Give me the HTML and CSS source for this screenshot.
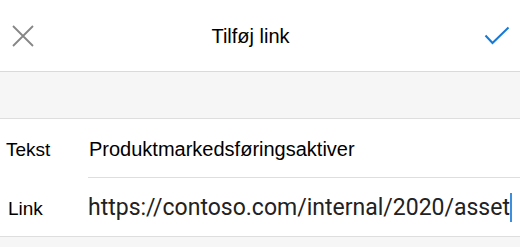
FILE: index.html
```html
<!DOCTYPE html>
<html lang="da">
<head>
<meta charset="utf-8">
<title>Tilføj link</title>
<link rel="stylesheet" href="styles.css">
</head>
<body>
<div class="screen">
  <header class="topbar">
    <button class="icon-btn close" aria-label="Luk">
      <svg width="22" height="22" viewBox="0 0 22 22"><path d="M1 1 L21 21 M21 1 L1 21" stroke="#868686" stroke-width="1.8" fill="none"/></svg>
    </button>
    <h1 class="title">Tilføj link</h1>
    <button class="icon-btn done" aria-label="Udført">
      <svg width="26" height="20" viewBox="0 0 26 20"><path d="M1.5 9.5 L8.5 17 L24.5 1.5" stroke="#1579d6" stroke-width="2" fill="none"/></svg>
    </button>
  </header>
  <div class="band"></div>
  <section class="form">
    <div class="row">
      <div class="label">Tekst</div>
      <div class="value">Produktmarkedsføringsaktiver</div>
    </div>
    <div class="row second">
      <div class="label link-label">Link</div>
      <div class="value url">https://contoso.com/internal/2020/asset<span class="caret"></span></div>
    </div>
  </section>
  <div class="rest"></div>
</div>
</body>
</html>
```
FILE: styles.css
```css
html, body {
  margin: 0;
  padding: 0;
  background: #f6f6f6;
}
.screen {
  width: 520px;
  height: 247px;
  overflow: hidden;
  font-family: "Liberation Sans", Arial, sans-serif;
  color: #000;
}
.topbar {
  height: 71px;
  background: #fff;
  border-bottom: 1px solid #dadada;
  display: flex;
  align-items: center;
  position: relative;
}
.icon-btn {
  border: 0;
  background: none;
  padding: 0;
  display: flex;
}
.close {
  margin-left: 12px;
  margin-top: 1px;
}
.title {
  flex: 1;
  margin: 0;
  text-align: center;
  font-weight: normal;
  font-size: 20px;
  line-height: 24px;
  padding-right: 17px;
  padding-top: 0px;
}
.done {
  margin-right: 10px;
  margin-top: 0px;
}
.band {
  height: 46px;
  background: #f6f6f6;
  border-bottom: 1px solid #dedede;
}
.form {
  background: #fff;
  border-bottom: 1px solid #dedede;
}
.row {
  display: flex;
  height: 58px;
}
.row.second {
  height: 59px;
}
.label {
  width: 82px;
  padding-left: 6px;
  font-size: 19px;
  line-height: 22px;
  padding-top: 20px;
  box-sizing: content-box;
}
.link-label {
  padding-left: 8px;
  width: 80px;
  padding-top: 21px;
}
.value {
  flex: 1;
  font-size: 20px;
  line-height: 22px;
  padding-top: 19px;
  padding-left: 1px;
  white-space: nowrap;
}
.second .value {
  border-top: 1px solid #dedede;
}
.url {
  font-family: Roboto, "Liberation Sans", sans-serif;
  font-size: 23px;
  color: #222;
  padding-top: 15px;
  padding-left: 0;
}
.caret {
  display: inline-block;
  width: 2px;
  height: 29px;
  background: #3b8fdc;
  vertical-align: -7px;
}
.rest {
  height: 10px;
  background: #f6f6f6;
}
```
